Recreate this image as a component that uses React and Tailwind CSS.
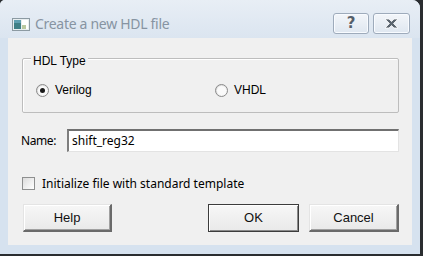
import React from "react";

const F = { fontFamily: '"Liberation Sans", Arial, sans-serif' };
const N = { fontFamily: '"Noto Sans", sans-serif' };

function Radio({ checked }) {
  return (
    <span className="relative flex h-[13px] w-[13px] items-center justify-center rounded-full border border-[#8a8a8a] bg-gradient-to-br from-[#d6d6d6] to-[#ffffff]">
      <span className="flex h-[9px] w-[9px] items-center justify-center rounded-full bg-[#fafafa]">
        {checked && <span className="h-[5px] w-[5px] rounded-full bg-[#1a1a1a]" />}
      </span>
    </span>
  );
}

function Btn({ children, def, w }) {
  return (
    <button
      className={
        "flex h-[28px] items-center justify-center text-[13px] text-[#111] " +
        (def
          ? "border border-[#3c3c3c] shadow-[inset_1px_1px_0_#ffffff,inset_-1px_-1px_0_#8a8a8a]"
          : "border-t border-l border-t-[#e4e4e4] border-l-[#e4e4e4] border-r-2 border-b-2 border-r-[#6a6a6a] border-b-[#6a6a6a] shadow-[inset_1px_1px_0_#ffffff,inset_-1px_-1px_0_#a0a0a0]") +
        " bg-gradient-to-b from-[#f7f7f7] to-[#e9e9e9]"
      }
      style={{ width: w, ...F }}
    >
      {children}
    </button>
  );
}

export default function App() {
  return (
    <div className="h-[256px] w-[423px] overflow-hidden bg-[#2a2d30]">
      <div className="flex h-[254px] w-[420px] flex-col rounded-tl-[5px] rounded-tr-[8px] bg-[#d6e2ef]">
        {/* title bar */}
        <div className="h-[38px] rounded-tl-[5px] rounded-tr-[8px] bg-gradient-to-b from-[#e8eef5] to-[#dbe5f0]">
          <div className="mt-[13px] flex h-[21px] items-center pl-[12px] pr-[10px]">
            <svg width="18" height="13" viewBox="0 0 18 13" className="mt-[1px]">
              <rect x="0.5" y="0.5" width="17" height="12" fill="#e8eef0" stroke="#8c9aa2" />
              <rect x="2" y="2" width="7" height="9" fill="#3f7f86" />
              <rect x="2" y="2" width="7" height="3" fill="#5f9fb0" />
              <rect x="10" y="2" width="6" height="9" fill="#ffffff" />
              <rect x="10" y="7" width="4" height="4" fill="#b9c8a0" />
            </svg>
            <span
              className="ml-[5px] text-[14px] leading-none tracking-[-0.3px] text-[#8794a2]"
              style={N}
            >
              Create a new HDL file
            </span>
            <div className="ml-auto flex gap-[4px]">
              <div className="flex h-[21px] w-[36px] items-center justify-center rounded-[3px] border border-[#9eabbb] bg-gradient-to-b from-[#f3f6fa] to-[#dfe7f0] shadow-[inset_0_0_0_1px_#f8fbff]">
                <span
                  className="text-[15px] font-bold leading-none text-[#56606a]"
                  style={{ fontFamily: '"DejaVu Sans", sans-serif', textShadow: "0 0 1px #fff" }}
                >
                  ?
                </span>
              </div>
              <div className="flex h-[21px] w-[37px] items-center justify-center rounded-[3px] border border-[#9eabbb] bg-gradient-to-b from-[#f3f6fa] to-[#dfe7f0] shadow-[inset_0_0_0_1px_#f8fbff]">
                <svg width="15" height="11" viewBox="0 0 15 11">
                  <path
                    d="M1 1 H5 L7.5 3.5 L10 1 H14 L9.5 5.5 L14 10 H10 L7.5 7.5 L5 10 H1 L5.5 5.5 Z"
                    fill="#5a646e"
                    stroke="#ffffff"
                    strokeWidth="0.8"
                    strokeLinejoin="round"
                  />
                </svg>
              </div>
            </div>
          </div>
        </div>

        {/* content */}
        <div className="mx-[8px] flex h-[207px] flex-col bg-[#f0f0f0] pl-[14px] pr-[13px] pt-[20px] text-[12px] text-black" style={F}>
          <div className="relative h-[55px] rounded-[2px] border border-[#bdbdbd] shadow-[inset_1px_1px_0_#ffffff]">
            <span className="absolute -top-[5px] left-[8px] bg-[#f0f0f0] px-[2px] leading-[14px]">HDL Type</span>
            <div className="flex h-full items-center pt-[9px]">
              <div className="ml-[13px] flex w-[179px] items-center gap-[6px]">
                <Radio checked />
                <span>Verilog</span>
              </div>
              <div className="flex items-center gap-[6px]">
                <Radio />
                <span>VHDL</span>
              </div>
            </div>
          </div>

          <div className="mt-[16px] flex h-[23px] items-center">
            <span className="-ml-[1px] w-[46px] text-[12px] tracking-[-0.4px]" style={N}>Name:</span>
            <div
              className="flex h-[23px] flex-1 items-center border-l-2 border-t-2 border-b border-r border-l-[#7e7e7e] border-t-[#707070] border-b-[#e3e3e3] border-r-[#e3e3e3] bg-white pl-[3px] text-[12px]"
              style={N}
            >
              shift_reg32
            </div>
          </div>

          <div className="mt-[25px] flex h-[13px] items-center gap-[7px]">
            <span className="h-[13px] w-[13px] border border-[#8e8f8f] bg-gradient-to-br from-[#dcdcdc] to-[#ffffff]" />
            <span className="text-[12px]" style={N}>
              Initialize file with standard template
            </span>
          </div>

          <div className="mt-[14px] flex">
            <div className="ml-[1px]">
              <Btn w={89}>Help</Btn>
            </div>
            <div className="ml-auto flex gap-[10px]">
              <Btn def w={91}>OK</Btn>
              <Btn w={90}>Cancel</Btn>
            </div>
          </div>
        </div>
      </div>
    </div>
  );
}
